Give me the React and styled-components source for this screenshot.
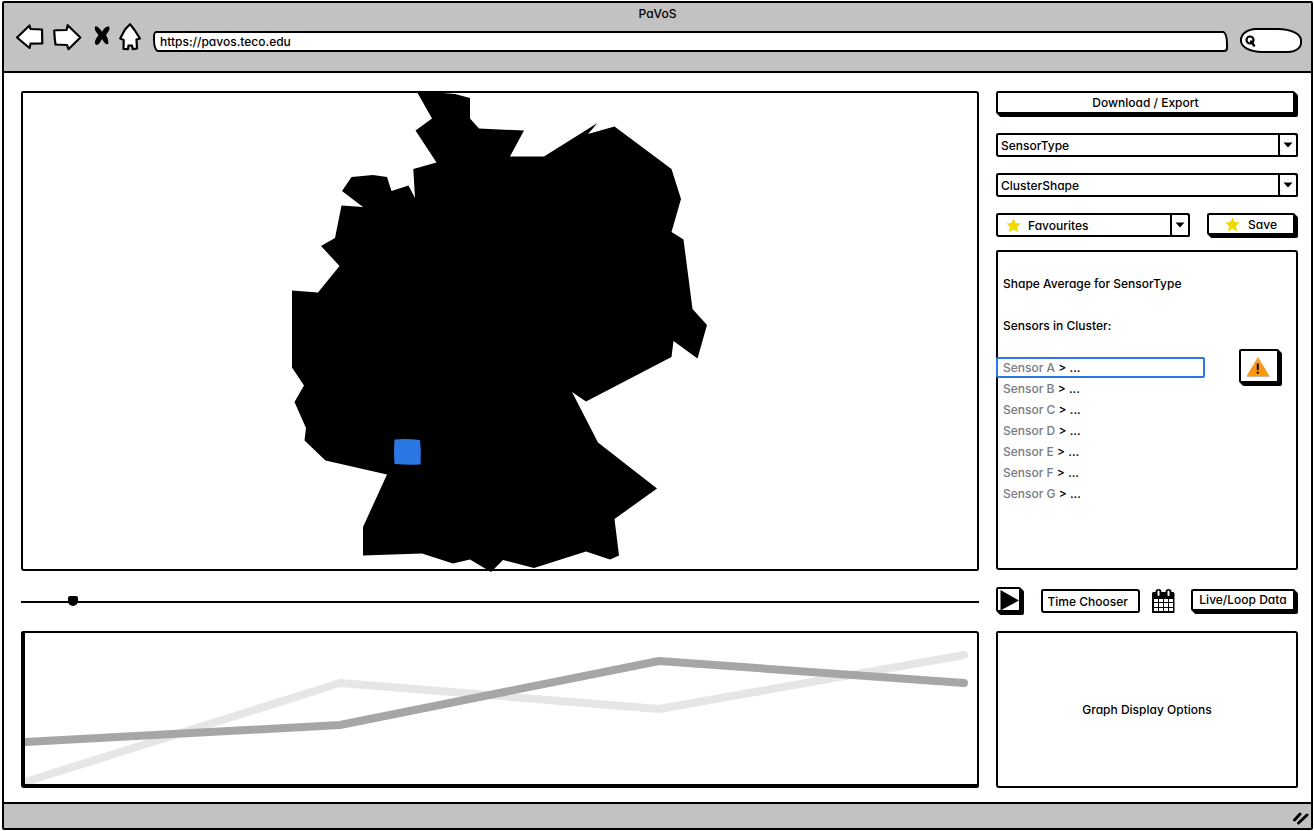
import React from "react";
import styled, { createGlobalStyle, css } from "styled-components";

const INK = "#000";
const CHROME = "#c2c2c2";
const BLUE = "#2b78e4";

const GlobalStyle = createGlobalStyle`
  *, *::before, *::after { box-sizing: border-box; }
  html, body { margin: 0; background: #fff; }
  body, button, input, select {
    font-family: Inter, "Liberation Sans", sans-serif;
    font-feature-settings: "cv11" 1;
    font-size: 12px;
    font-weight: 500;
    color: ${INK};
  }
  #root { padding: 1px 1px 1px 2px; }
`;

const sketchCorners = css`
  border-radius: 2px 3px 2px 3px;
`;

/* ---------- browser window ---------- */

const BrowserWindow = styled.div`
  display: flex;
  flex-direction: column;
  min-height: calc(100vh - 2px);
  border: 2px solid ${INK};
  border-radius: 2px;
  background: #fff;
`;

const Chrome = styled.header`
  height: 70px;
  padding-top: 1px;
  border-bottom: 2px solid ${INK};
  background: ${CHROME};
`;

const Title = styled.h1`
  margin: 0;
  font-size: 12px;
  font-weight: 500;
  line-height: 20px;
  text-align: center;
`;

const AddressRow = styled.div`
  display: grid;
  grid-template-columns: auto 1fr 62px;
  align-items: end;
  gap: 12px;
  padding: 0 9px 0 12px;
`;

const NavButtons = styled.nav`
  display: flex;
  gap: 8px;
`;

const NavButton = styled.button`
  display: block;
  width: ${(p) => p.$width}px;
  height: 29px;
  padding: 0;
  border: 0;
  background: none;

  svg {
    display: block;
    overflow: visible;
  }
`;

const AddressInput = styled.input`
  width: 100%;
  height: 21px;
  margin: 0 0 1px;
  padding: 0 5px;
  border: 2px solid ${INK};
  border-radius: 3px 5px 4px 5px / 6px 12px 4px 12px;
  background: #fff;
  outline: none;
`;

const SearchBox = styled.label`
  display: flex;
  align-items: center;
  height: 25px;
  padding-left: 3px;
  border: 2px solid ${INK};
  border-radius: 16px 24px 14px 22px / 12px 12px 10px 12px;
  background: #fff;

  input {
    flex: 1;
    min-width: 0;
    padding: 0;
    border: 0;
    background: none;
    outline: none;
  }
`;

const StatusBar = styled.footer`
  display: flex;
  justify-content: flex-end;
  align-items: center;
  height: 26px;
  padding: 3px 2px 0 0;
  border-top: 2px solid ${INK};
  background: ${CHROME};
`;

/* ---------- page ---------- */

const Page = styled.main`
  flex: 1;
  display: grid;
  grid-template-columns: minmax(0, 1fr) 302px;
  grid-template-rows: minmax(480px, 1fr) 30px 157px;
  gap: 15px 17px;
  padding: 18px 13px 14px 17px;
`;

const Panel = styled.section`
  border: 2px solid ${INK};
  ${sketchCorners}
  background: #fff;
`;

const MapPanel = styled(Panel)`
  display: flex;

  svg {
    width: 100%;
    overflow: visible;
  }
`;

const Sidebar = styled.aside`
  display: flex;
  flex-direction: column;
  gap: 12px;
  padding-bottom: 1px;
`;

const Controls = styled.div`
  display: flex;
  flex-direction: column;
  gap: 16px;
`;

const ControlRow = styled.div`
  display: grid;
  grid-template-columns: 194px 1fr;
  align-items: start;
  gap: 17px;
`;

const SketchButton = styled.button`
  display: flex;
  align-items: center;
  justify-content: center;
  gap: 8px;
  width: ${(p) => (p.$width ? `${p.$width}px` : "auto")};
  height: ${(p) => p.$height || 22}px;
  margin: 0 3px 3px 0;
  padding: 0;
  border: 2px solid ${INK};
  border-radius: 2px;
  background: #fff;
  box-shadow: 1px 1px 0 ${INK}, 2px 2px 0 ${INK}, 3px 3px 0 ${INK};
  white-space: nowrap;
`;

const Combo = styled.div`
  position: relative;
  height: 24px;

  select {
    width: 100%;
    height: 100%;
    padding: 0 22px 0 ${(p) => (p.$icon ? 30 : 3)}px;
    border: 2px solid ${INK};
    ${sketchCorners}
    background: #fff;
    appearance: none;
    outline: none;
  }
`;

const ComboArrow = styled.span`
  position: absolute;
  top: 0;
  right: 0;
  display: grid;
  place-items: center;
  width: 20px;
  height: 100%;
  border: 2px solid ${INK};
  ${sketchCorners}
  pointer-events: none;
`;

const ComboIcon = styled.span`
  position: absolute;
  top: 0;
  left: 10px;
  display: grid;
  place-items: center;
  height: 100%;
  pointer-events: none;
`;

const ClusterPanel = styled(Panel)`
  flex: 1;
  display: flex;
  justify-content: space-between;
  padding: 21px 14px 20px 0;
`;

const ClusterText = styled.div`
  width: 207px;

  p {
    margin: 0 0 21px;
    padding-left: 5px;
    line-height: 21px;
  }
`;

const SensorList = styled.ul`
  margin: 0 0 0 -2px;
  padding: 0;
  list-style: none;
`;

const SensorItem = styled.li`
  height: 21px;
  padding-left: 7px;
  line-height: 21px;
  ${(p) =>
    p.$selected &&
    css`
      box-shadow: inset 0 0 0 2px ${BLUE};
      border-radius: 2px;
    `}

  a {
    color: #7a7a84;
    text-decoration: none;
  }
`;

const WarningSlot = styled.div`
  padding-top: 76px;
`;

const TimeSlider = styled.input`
  align-self: center;
  width: 100%;
  height: 12px;
  margin: 2px 0 0;
  background: none;
  appearance: none;
  outline: none;

  &::-webkit-slider-runnable-track {
    height: 2px;
    background: ${INK};
  }
  &::-webkit-slider-thumb {
    width: 10px;
    height: 10px;
    margin-top: -5px;
    border-radius: 2px 2px 5px 5px;
    background: ${INK};
    appearance: none;
  }
`;

const TimeControls = styled.div`
  display: flex;
  align-items: center;
  justify-content: space-between;
`;

const TimeField = styled.div`
  display: flex;
  align-items: center;
  gap: 11px;
`;

const TimeInput = styled.input`
  width: 99px;
  height: 24px;
  margin: 0;
  padding: 0 5px;
  border: 2px solid ${INK};
  ${sketchCorners}
  background: #fff;
  outline: none;
`;

const IconButton = styled.button`
  display: block;
  width: 24px;
  height: 26px;
  padding: 0;
  border: 0;
  background: none;

  svg { display: block; }
`;

const GraphPanel = styled(Panel)`
  border-width: 2px 2px 4px 4px;

  svg {
    display: block;
    width: 100%;
    height: 100%;
  }
  polyline {
    fill: none;
    stroke-width: 8px;
    stroke-linecap: round;
    stroke-linejoin: round;
    vector-effect: non-scaling-stroke;
  }
`;

const OptionsPanel = styled(Panel)`
  display: grid;
  place-items: center;
`;

/* ---------- drawings ---------- */

const stroke = {
  fill: "#fff",
  stroke: INK,
  strokeWidth: 2.2,
  strokeLinejoin: "round",
  strokeLinecap: "round",
};

const BackIcon = () => (
  <svg width="29" height="29" viewBox="16 24 29 29" aria-hidden="true">
    <path {...stroke} d="M17 37.500L29.500 25.500L30.500 29L42 29.500L42.300 43.500L30.500 43.700L29.500 48Z" />
  </svg>
);

const ForwardIcon = () => (
  <svg width="29" height="29" viewBox="53 24 29 29" aria-hidden="true">
    <path {...stroke} d="M54.200 30.500Q54.500 30 66.500 30L67.700 25.200L80.300 37.500L68.500 49.200L67 45L55.500 44.500Q54.500 38 54.200 30.500Z" />
  </svg>
);

const StopIcon = () => (
  <svg width="20" height="29" viewBox="90 24 20 29" aria-hidden="true">
    <path d="M95.500 26C99 27 101 30 102 32C103.500 29 106 26 109 26.500Q111 29 106 35Q108.500 39 108.500 43Q106.500 47 102 39Q99 45 96.500 45Q92.500 43 98.500 35Q93 29 95.500 26Z" fill={INK} />
  </svg>
);

const HomeIcon = () => (
  <svg width="23" height="29" viewBox="118 24 23 29" aria-hidden="true">
    <path {...stroke} d="M130 24.200L134.500 30L140 38.500L136.500 39.500L137 48.500L132.800 49.200L132 45.500L128.500 45.500L128 49.200L123.500 49L123.700 40L120.200 38.500L125 29.500Z" />
  </svg>
);

const SearchIcon = () => (
  <svg width="12" height="12" viewBox="0 0 12 12" aria-hidden="true">
    <circle cx="5" cy="5" r="3.500" fill="none" stroke={INK} strokeWidth="2.200" />
    <path d="M6 6.500L9 10.500" stroke={INK} strokeWidth="2.400" strokeLinecap="round" />
  </svg>
);

const StarIcon = () => (
  <svg width="15" height="15" viewBox="0 0 15 15" aria-hidden="true">
    <path d="M7.500 0.500L9.700 5L14.700 5.500L11 9L12.200 14.200L7.500 11.800L2.800 14.200L4 9L0.300 5.500L5.300 5Z" fill="#f0d800" />
  </svg>
);

const ArrowDown = () => (
  <svg width="10" height="6" viewBox="0 0 10 6" aria-hidden="true">
    <path d="M0.500 0.500L9.500 0.500L5 5.500Z" fill={INK} />
  </svg>
);

const WarningIcon = () => (
  <svg width="24" height="21" viewBox="1 0 24 21" aria-hidden="true">
    <defs>
      <linearGradient id="warn" x1="0" y1="0" x2="0" y2="1">
        <stop offset="0" stopColor="#f9a63f" />
        <stop offset="0.600" stopColor="#f7941d" />
        <stop offset="1" stopColor="#ff9c00" />
      </linearGradient>
    </defs>
    <path d="M12 0.800L23.500 20.300L0.500 20.300Z" fill="url(#warn)" />
    <path d="M0.500 20.200H23.500" stroke="#b5a79a" />
    <path d="M11.800 7.500V14" stroke="#111" strokeWidth="2" />
    <path d="M11.800 15.500V17.800" stroke="#111" strokeWidth="2" />
  </svg>
);

const PlayIcon = () => (
  <svg width="20" height="20" viewBox="0 0 20 20" aria-hidden="true">
    <path d="M1.500 0L20 10.500L1.500 20.500Z" fill={INK} />
  </svg>
);

const CalendarIcon = () => (
  <svg width="24" height="26" viewBox="0 0 24 26" aria-hidden="true">
    <path d="M2 4H22Q23.500 4 23.500 6V25H1V6Q1 4 2 4Z" fill={INK} />
    <path
      d="M3 11h4v3h-4zM8 11h4v3h-4zM13 11h4v3h-4zM18 11h4v3h-4zM3 15h4v4h-4zM8 15h4v4h-4zM13 15h4v4h-4zM18 15h4v4h-4zM3 20h4v3h-4zM8 20h4v3h-4zM13 20h4v3h-4zM18 20h4v3h-4z"
      fill="#fff"
    />
    <path d="M7.500 4V7M17.500 4V7" stroke={INK} strokeWidth="6" strokeLinecap="round" />
    <path d="M7.500 3.500V7M17.500 3.500V7" stroke="#fff" strokeWidth="2" strokeLinecap="round" />
  </svg>
);

const ResizeGrip = () => (
  <svg width="17" height="14" viewBox="0 0 17 14" aria-hidden="true">
    <path d="M2.500 9L8 3M6.500 12L15 4" stroke={INK} strokeWidth="3" strokeLinecap="round" />
  </svg>
);

const GermanyMap = () => (
  <svg viewBox="23 93 954 476" role="img" aria-label="Map of Germany">
    <polygon
      fill={INK}
      points="417,92 432,118.500 415.500,130.500 436.500,162.500 413.300,169 415,198 408.500,185.500 391.500,191 387,177 373,175 351.500,177 342,191 363,207 341.500,205.500 335,238 321,246 339.500,266 318,292.500 292,290.500 292,367.500 304,385.500 294.500,402 306,428 304.500,440.500 325.500,460.500 387,474.500 363,527 363,555.500 422,553.500 453,563.500 470,559.500 491,572 503,560 534,568 586,551.500 610,559.500 619,555.500 614.500,519 657,488.500 598,442.500 572,392 586,401.500 671.500,357 673.500,341 697.500,358.500 707,325 692.500,309 683.500,239.500 671.500,232 681,199 671.500,169 614.500,126.500 588,134 597.500,123 544,156.500 510,156.500 524,130.500 479,128.500 470,118.500 470,98 455,94 437,92.500"
    />
    <path fill={BLUE} d="M394.500 439.500Q407 438.500 420 440Q421.500 452 420.500 464.500Q407 465 394.500 464Q393.500 452 394.500 439.500Z" />
  </svg>
);

const sensors = ["A", "B", "C", "D", "E", "F", "G"];

const series = [
  { color: "#e6e6e6", points: "0,149 315,50 634,76 939,22" },
  { color: "#a6a6a6", points: "0,109 315,92 634,28 939,50" },
];

function ComboBox({ label, icon }) {
  return (
    <Combo $icon={Boolean(icon)}>
      <select aria-label={label} defaultValue={label}>
        <option>{label}</option>
      </select>
      {icon && <ComboIcon>{icon}</ComboIcon>}
      <ComboArrow>
        <ArrowDown />
      </ComboArrow>
    </Combo>
  );
}

export default function App() {
  return (
    <>
      <GlobalStyle />
      <BrowserWindow>
        <Chrome>
          <Title>PaVoS</Title>
          <AddressRow>
            <NavButtons aria-label="Browser">
              <NavButton $width={29} aria-label="Back"><BackIcon /></NavButton>
              <NavButton $width={29} aria-label="Forward"><ForwardIcon /></NavButton>
              <NavButton $width={20} aria-label="Stop"><StopIcon /></NavButton>
              <NavButton $width={23} aria-label="Home"><HomeIcon /></NavButton>
            </NavButtons>
            <AddressInput aria-label="Address" defaultValue="https://pavos.teco.edu" />
            <SearchBox>
              <SearchIcon />
              <input type="search" aria-label="Search" />
            </SearchBox>
          </AddressRow>
        </Chrome>

        <Page>
          <MapPanel>
            <GermanyMap />
          </MapPanel>

          <Sidebar>
            <Controls>
              <SketchButton $height={23}>Download / Export</SketchButton>
              <ComboBox label="SensorType" />
              <ComboBox label="ClusterShape" />
              <ControlRow>
                <ComboBox label="Favourites" icon={<StarIcon />} />
                <SketchButton>
                  <StarIcon />
                  Save
                </SketchButton>
              </ControlRow>
            </Controls>
            <ClusterPanel>
              <ClusterText>
                <p>Shape Average for SensorType</p>
                <p>Sensors in Cluster:</p>
                <SensorList>
                  {sensors.map((name) => (
                    <SensorItem key={name} $selected={name === "A"}>
                      <a href={`#sensor-${name}`}>Sensor {name}</a> &gt; ...
                    </SensorItem>
                  ))}
                </SensorList>
              </ClusterText>
              <WarningSlot>
                <SketchButton $width={40} $height={34} aria-label="Warnings">
                  <WarningIcon />
                </SketchButton>
              </WarningSlot>
            </ClusterPanel>
          </Sidebar>

          <TimeSlider type="range" aria-label="Time" min="0" max="100" step="0.1" defaultValue="5" />

          <TimeControls>
            <SketchButton $width={25} $height={25} aria-label="Play">
              <PlayIcon />
            </SketchButton>
            <TimeField>
              <TimeInput aria-label="Time" defaultValue="Time Chooser" />
              <IconButton aria-label="Calendar">
                <CalendarIcon />
              </IconButton>
            </TimeField>
            <SketchButton $width={104}>Live/Loop Data</SketchButton>
          </TimeControls>

          <GraphPanel>
            <svg viewBox="0 0 952 151" preserveAspectRatio="none" role="img" aria-label="Sensor graph">
              {series.map((s) => (
                <polyline key={s.color} points={s.points} stroke={s.color} />
              ))}
            </svg>
          </GraphPanel>

          <OptionsPanel>Graph Display Options</OptionsPanel>
        </Page>

        <StatusBar>
          <ResizeGrip />
        </StatusBar>
      </BrowserWindow>
    </>
  );
}
